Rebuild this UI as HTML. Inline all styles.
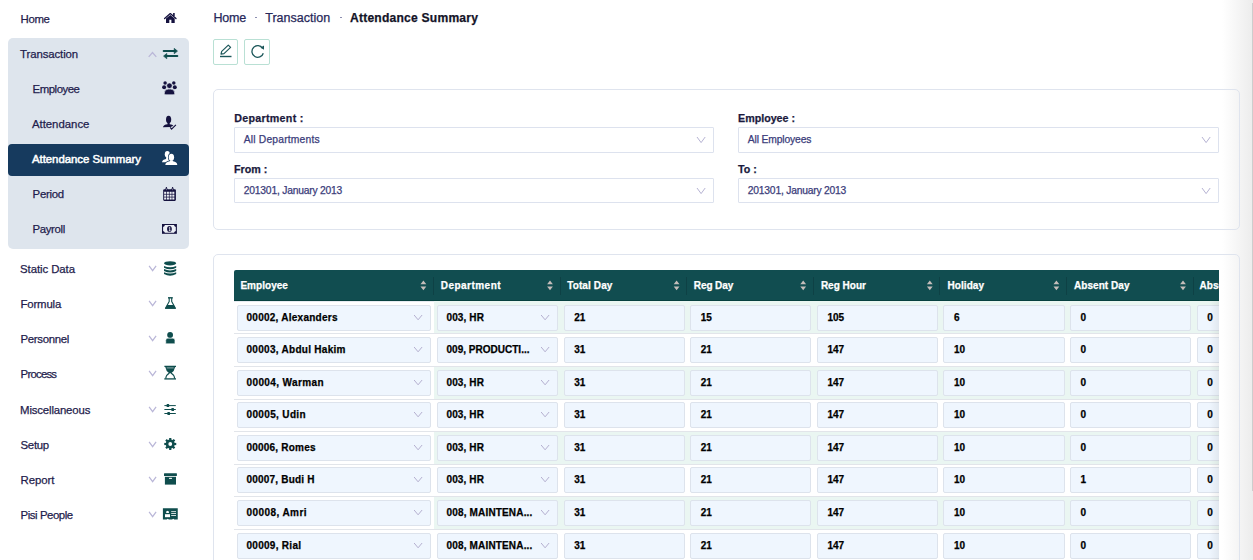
<!DOCTYPE html><html><head><meta charset="utf-8"><style>
*{margin:0;padding:0;box-sizing:border-box}
html,body{width:1253px;height:560px;overflow:hidden;background:#fff;font-family:"Liberation Sans", sans-serif}
.t{position:absolute;line-height:1;white-space:nowrap;-webkit-text-stroke:0.25px currentColor}
.a{position:absolute}
svg{position:absolute;overflow:visible}
</style></head><body>
<div class="a" style="left:1222px;top:0;width:31px;height:560px;background:linear-gradient(90deg,rgba(236,236,236,0),rgba(236,236,236,1))"></div><div class="a" style="left:8px;top:38px;width:181px;height:211px;background:#dee5ed;border-radius:5px"></div><div class="a" style="left:8px;top:144px;width:181px;height:32px;background:#163a5e;border-radius:4px"></div><div class="t" style="left:20.60px;top:14.15px;font-size:11.4px;color:#1f1d4d;letter-spacing:-0.372px;">Home</div>
<div class="t" style="left:20.10px;top:49.15px;font-size:11.4px;color:#1f1d4d;letter-spacing:-0.104px;">Transaction</div>
<div class="t" style="left:32.60px;top:84.15px;font-size:11.4px;color:#1f1d4d;letter-spacing:-0.471px;">Employee</div>
<div class="t" style="left:31.90px;top:119.15px;font-size:11.4px;color:#1f1d4d;letter-spacing:-0.009px;">Attendance</div>
<div class="t" style="left:32.00px;top:154.15px;font-size:11.4px;color:#ffffff;letter-spacing:-0.037px;-webkit-text-stroke:0.5px #fff;">Attendance Summary</div>
<div class="t" style="left:32.60px;top:189.15px;font-size:11.4px;color:#1f1d4d;letter-spacing:-0.271px;">Period</div>
<div class="t" style="left:32.60px;top:224.15px;font-size:11.4px;color:#1f1d4d;letter-spacing:-0.375px;">Payroll</div>
<div class="t" style="left:20.10px;top:264.15px;font-size:11.4px;color:#1f1d4d;letter-spacing:-0.077px;">Static Data</div>
<div class="t" style="left:20.60px;top:299.15px;font-size:11.4px;color:#1f1d4d;letter-spacing:-0.186px;">Formula</div>
<div class="t" style="left:20.60px;top:334.15px;font-size:11.4px;color:#1f1d4d;letter-spacing:-0.329px;">Personnel</div>
<div class="t" style="left:20.60px;top:369.15px;font-size:11.4px;color:#1f1d4d;letter-spacing:-0.779px;">Process</div>
<div class="t" style="left:20.10px;top:405.15px;font-size:11.4px;color:#1f1d4d;letter-spacing:-0.161px;">Miscellaneous</div>
<div class="t" style="left:20.60px;top:440.15px;font-size:11.4px;color:#1f1d4d;letter-spacing:-0.322px;">Setup</div>
<div class="t" style="left:20.60px;top:475.15px;font-size:11.4px;color:#1f1d4d;letter-spacing:-0.082px;">Report</div>
<div class="t" style="left:20.60px;top:510.15px;font-size:11.4px;color:#1f1d4d;letter-spacing:-0.443px;">Pisi People</div>
<svg style="left:0;top:0" width="1253" height="560"><path d="M164.6 18.6 L170.3 13.6 L176 18.6" fill="none" stroke="#15123f" stroke-width="1.3" stroke-linecap="round" stroke-linejoin="round"/>
<rect x="173.1" y="13" width="1.6" height="3" fill="#15123f"/>
<path d="M166 18.6 L170.3 15 L174.7 18.6 L174.7 22.9 L171.4 22.9 L171.4 19.8 L169.3 19.8 L169.3 22.9 L166 22.9 Z" fill="#15123f"/><path d="M163.7 51.1 H175" stroke="#0f4d4d" stroke-width="2" stroke-linecap="round"/>
<path d="M174.2 48.3 L177.5 51.1 L174.2 53.8 Z" fill="#0f4d4d" stroke="#0f4d4d" stroke-width="0.6" stroke-linejoin="round"/>
<path d="M166 56.1 H177.3" stroke="#0f4d4d" stroke-width="2" stroke-linecap="round"/>
<path d="M166.8 53.4 L163.5 56.1 L166.8 58.8 Z" fill="#0f4d4d" stroke="#0f4d4d" stroke-width="0.6" stroke-linejoin="round"/><circle cx="165.1" cy="83" r="1.75" fill="#15123f"/><circle cx="173.8" cy="83" r="1.75" fill="#15123f"/>
<circle cx="164.1" cy="87.2" r="2" fill="#15123f"/><circle cx="174.8" cy="87.2" r="2" fill="#15123f"/>
<circle cx="169.45" cy="85.7" r="2.8" fill="#15123f" stroke="#dee5ed" stroke-width="0.7"/>
<path d="M164.3 93 Q164.3 89.1 168.2 89.1 H170.8 Q174.7 89.1 174.7 93 V93.3 Q174.7 94.8 173.2 94.8 H165.8 Q164.3 94.8 164.3 93.3 Z" fill="#15123f" stroke="#dee5ed" stroke-width="0.7"/><ellipse cx="168.6" cy="119.5" rx="2.6" ry="3.8" fill="#15123f"/>
<path d="M167.5 122.5 H169.7 V124.2 Q172.6 124.5 173.4 125.7 L170.6 127.1 Q167 127.1 162.9 127.3 Q163.4 124.6 167.5 124.2 Z" fill="#15123f"/>
<path d="M170.2 127.3 L171.6 129.2 L175.9 124.8" fill="none" stroke="#15123f" stroke-width="1.15" stroke-linejoin="round"/><ellipse cx="167.3" cy="154.2" rx="2.5" ry="3.3" fill="#ffffff"/>
<path d="M162 162.2 Q162.4 159.6 166 159 L166.3 157 H168.3 L168.6 159 Q169.6 159.2 170.2 159.8 L169.6 162.2 Z" fill="#ffffff"/><ellipse cx="171.4" cy="157.2" rx="2.7" ry="3.5" fill="#163a5e" stroke="#163a5e" stroke-width="1.5"/><path d="M165.3 165 Q165.5 162 169.8 161.3 L170.3 160.3 H172.5 L173 161.3 Q177.1 162 177.3 165 Z" fill="#163a5e" stroke="#163a5e" stroke-width="1.5"/><ellipse cx="171.4" cy="157.2" rx="2.7" ry="3.5" fill="#ffffff" stroke="none" stroke-width="0"/><path d="M165.3 165 Q165.5 162 169.8 161.3 L170.3 160.3 H172.5 L173 161.3 Q177.1 162 177.3 165 Z" fill="#ffffff" stroke="none" stroke-width="0"/><rect x="163.2" y="189.2" width="12.7" height="11.7" rx="1.1" fill="#15123f"/>
<path d="M165.3 190.6 L166.4 187.1 L167.5 190.6 Z M171.5 190.6 L172.6 187.1 L173.7 190.6 Z" fill="#15123f" stroke="#15123f" stroke-width="0.8" stroke-linejoin="round"/>
<path d="M166.4 188.6 V190.2 M172.6 188.6 V190.2" stroke="#dee5ed" stroke-width="0.5"/><rect x="164.15" y="191.75" width="2.05" height="2.1" fill="#eceff5"/><rect x="164.15" y="194.60" width="2.05" height="2.1" fill="#eceff5"/><rect x="164.15" y="197.45" width="2.05" height="2.1" fill="#eceff5"/><rect x="166.87" y="191.75" width="2.05" height="2.1" fill="#eceff5"/><rect x="166.87" y="194.60" width="2.05" height="2.1" fill="#eceff5"/><rect x="166.87" y="197.45" width="2.05" height="2.1" fill="#eceff5"/><rect x="169.59" y="191.75" width="2.05" height="2.1" fill="#eceff5"/><rect x="169.59" y="194.60" width="2.05" height="2.1" fill="#eceff5"/><rect x="169.59" y="197.45" width="2.05" height="2.1" fill="#eceff5"/><rect x="172.31" y="191.75" width="2.05" height="2.1" fill="#eceff5"/><rect x="172.31" y="194.60" width="2.05" height="2.1" fill="#eceff5"/><rect x="172.31" y="197.45" width="2.05" height="2.1" fill="#eceff5"/><rect x="162" y="224" width="14.9" height="9.8" fill="#15123f"/>
<path d="M164.9 225.1 H174 Q174.3 226.5 175.8 226.9 V230.9 Q174.3 231.3 174 232.7 H164.9 Q164.6 231.3 163.1 230.9 V226.9 Q164.6 226.5 164.9 225.1 Z" fill="#eceff5"/>
<ellipse cx="169.45" cy="228.9" rx="2.35" ry="2.9" fill="#15123f"/>
<path d="M168.8 227.8 L169.7 227.2 V230.7 M168.9 230.6 H170.5" stroke="#eceff5" stroke-width="0.8" fill="none"/><ellipse cx="170.1" cy="263.3" rx="6.1" ry="2.15" fill="#0f4d4d"/><path d="M164 265.90 Q170.1 268.50 176.2 265.90 V267.70 Q170.1 270.90 164 267.70 Z" fill="#0f4d4d"/><path d="M164 269.10 Q170.1 271.70 176.2 269.10 V270.90 Q170.1 274.10 164 270.90 Z" fill="#0f4d4d"/><path d="M164 272.30 Q170.1 274.90 176.2 272.30 V274.10 Q170.1 277.30 164 274.10 Z" fill="#0f4d4d"/><path d="M168 297.8 H172.8" stroke="#0f4d4d" stroke-width="1.4"/>
<path d="M169.2 298 V301.4 L165.5 308.2 H175.4 L171.7 301.4 V298" fill="none" stroke="#0f4d4d" stroke-width="1.1" stroke-linejoin="round"/>
<path d="M167.2 305 H173.7 L175.9 308.8 H164.9 Z" fill="#0f4d4d"/><circle cx="170.1" cy="335" r="2.9" fill="#0f4d4d"/>
<path d="M165.8 343.7 V340.2 Q165.8 338.2 167.8 338.2 H172.9 Q174.9 338.2 174.9 340.2 V343.7 Z" fill="#0f4d4d" stroke="#fff" stroke-width="0.5"/><path d="M164.4 366.4 H176" stroke="#0f4d4d" stroke-width="1.3"/>
<path d="M164.3 378.9 H176" stroke="#0f4d4d" stroke-width="1.3"/>
<path d="M165.3 367 L175.1 367 Q174.5 371 171.2 373.3 L169.2 373.3 Q165.9 371 165.3 367 Z" fill="#0f4d4d"/>
<path d="M166.7 367.9 H173.7" stroke="#e8efee" stroke-width="0.6"/>
<path d="M169.4 373 Q166 375 165.7 378.6 M171 373 Q174.4 375 174.7 378.6" fill="none" stroke="#0f4d4d" stroke-width="1.1"/><path d="M164.4 405.6 H175.8 M164.4 409.5 H175.8 M164.4 413.5 H175.8" stroke="#0f4d4d" stroke-width="1"/>
<rect x="166.6" y="404.1" width="2.6" height="3" rx="0.6" fill="#0f4d4d"/>
<rect x="171.4" y="408" width="2.6" height="3" rx="0.6" fill="#0f4d4d"/>
<rect x="167.4" y="412" width="2.6" height="3" rx="0.6" fill="#0f4d4d"/><rect x="169.15" y="438.00" width="2.2" height="3" fill="#0f4d4d" transform="rotate(0 170.25 444)"/><rect x="169.15" y="438.00" width="2.2" height="3" fill="#0f4d4d" transform="rotate(45 170.25 444)"/><rect x="169.15" y="438.00" width="2.2" height="3" fill="#0f4d4d" transform="rotate(90 170.25 444)"/><rect x="169.15" y="438.00" width="2.2" height="3" fill="#0f4d4d" transform="rotate(135 170.25 444)"/><rect x="169.15" y="438.00" width="2.2" height="3" fill="#0f4d4d" transform="rotate(180 170.25 444)"/><rect x="169.15" y="438.00" width="2.2" height="3" fill="#0f4d4d" transform="rotate(225 170.25 444)"/><rect x="169.15" y="438.00" width="2.2" height="3" fill="#0f4d4d" transform="rotate(270 170.25 444)"/><rect x="169.15" y="438.00" width="2.2" height="3" fill="#0f4d4d" transform="rotate(315 170.25 444)"/><circle cx="170.25" cy="444" r="3.2" fill="none" stroke="#0f4d4d" stroke-width="2.6"/><rect x="164" y="473.2" width="12.9" height="2.8" rx="0.5" fill="#0f4d4d"/>
<rect x="164.9" y="476.8" width="11.1" height="7.8" fill="#0f4d4d"/>
<rect x="169" y="477.8" width="3" height="1.2" rx="0.5" fill="#e6eeed"/><path d="M162.9 508.2 H177.75 V519.6 H174.3 L173.2 518.8 L172.1 519.6 H168.8 L167.8 518.8 L166.7 519.6 H162.9 Z" fill="#0f4d4d"/>
<path d="M166.2 511.6 L167.5 510.7 L168.9 511.6 V513.1 H166.2 Z" fill="#ffffff"/>
<rect x="165" y="514.2" width="5" height="3" fill="#ffffff"/>
<path d="M171.2 511.6 H176 M171.2 513.5 H176 M171.2 515.5 H176" stroke="#ffffff" stroke-width="0.8"/></svg><svg style="left:0;top:0" width="1" height="1"><path d="M148.7 56.9 L152.5 52.5 L156.29999999999998 56.9" fill="none" stroke="#bab7d8" stroke-width="1.25"/></svg><svg style="left:0;top:0" width="1" height="1"><path d="M149.1 265.9 L152.6 270.59999999999997 L156.1 265.9" fill="none" stroke="#bab7d8" stroke-width="1.25"/></svg><svg style="left:0;top:0" width="1" height="1"><path d="M149.1 300.9 L152.6 305.59999999999997 L156.1 300.9" fill="none" stroke="#bab7d8" stroke-width="1.25"/></svg><svg style="left:0;top:0" width="1" height="1"><path d="M149.1 335.9 L152.6 340.59999999999997 L156.1 335.9" fill="none" stroke="#bab7d8" stroke-width="1.25"/></svg><svg style="left:0;top:0" width="1" height="1"><path d="M149.1 370.9 L152.6 375.59999999999997 L156.1 370.9" fill="none" stroke="#bab7d8" stroke-width="1.25"/></svg><svg style="left:0;top:0" width="1" height="1"><path d="M149.1 406.9 L152.6 411.59999999999997 L156.1 406.9" fill="none" stroke="#bab7d8" stroke-width="1.25"/></svg><svg style="left:0;top:0" width="1" height="1"><path d="M149.1 441.9 L152.6 446.59999999999997 L156.1 441.9" fill="none" stroke="#bab7d8" stroke-width="1.25"/></svg><svg style="left:0;top:0" width="1" height="1"><path d="M149.1 476.9 L152.6 481.59999999999997 L156.1 476.9" fill="none" stroke="#bab7d8" stroke-width="1.25"/></svg><svg style="left:0;top:0" width="1" height="1"><path d="M149.1 511.9 L152.6 516.6 L156.1 511.9" fill="none" stroke="#bab7d8" stroke-width="1.25"/></svg><div class="t" style="left:213.40px;top:12.22px;font-size:12.5px;color:#27285a;letter-spacing:-0.150px;">Home</div>
<div class="a" style="left:255px;top:16.6px;width:2px;height:1.6px;border-radius:0.8px;background:#7d7fa6"></div><div class="t" style="left:265.30px;top:12.22px;font-size:12.5px;color:#27285a;letter-spacing:-0.005px;">Transaction</div>
<div class="a" style="left:339.5px;top:16.6px;width:2px;height:1.6px;border-radius:0.8px;background:#7d7fa6"></div><div class="t" style="left:350.00px;top:11.76px;font-size:12.1px;color:#141428;font-weight:700;letter-spacing:0.212px;">Attendance Summary</div>
<div class="a" style="left:213px;top:39px;width:25px;height:26px;border:1px solid #b9e0d4;border-radius:2px"></div><div class="a" style="left:244px;top:39px;width:26px;height:26px;border:1px solid #b9e0d4;border-radius:2px"></div><svg style="left:0;top:0" width="1" height="1"><g fill="none" stroke="#1c575a" stroke-width="1.2" stroke-linejoin="round"><path d="M221 54.2 L221.7 51.4 L228.3 45.1 L230.6 47.4 L224 53.6 Z"/><path d="M220 56.5 H231.5" stroke-width="1.4"/></g></svg><svg style="left:0;top:0" width="1" height="1"><g fill="none" stroke="#1c575a" stroke-width="1.3"><path d="M262.6 48.3 A5.8 5.8 0 1 0 263.3 53.2"/></g><path d="M260.5 47.5 L264 45.5 L264 49.8 Z" fill="#1c575a"/></svg><div class="a" style="left:213px;top:89px;width:1027px;height:141px;border:1px solid #dfe4ee;border-radius:5px"></div><div class="t" style="left:234.20px;top:113.14px;font-size:10.7px;color:#1b1a3d;font-weight:700;letter-spacing:0.291px;">Department :</div>
<div class="a" style="left:234px;top:127px;width:480px;height:26px;border:1px solid #dde2ee;border-radius:1px"></div><div class="t" style="left:243.80px;top:135.28px;font-size:10.3px;color:#3a3c7a;letter-spacing:0.180px;">All Departments</div>
<svg style="left:0;top:0" width="1" height="1"><path d="M697 137 L701.1 142.6 L705.2 137" fill="none" stroke="#b6b3d3" stroke-width="1"/></svg><div class="t" style="left:738.00px;top:113.14px;font-size:10.7px;color:#1b1a3d;font-weight:700;">Employee :</div>
<div class="a" style="left:738px;top:127px;width:481px;height:26px;border:1px solid #dde2ee;border-radius:1px"></div><div class="t" style="left:747.80px;top:135.28px;font-size:10.3px;color:#3a3c7a;letter-spacing:-0.138px;">All Employees</div>
<svg style="left:0;top:0" width="1" height="1"><path d="M1202 137 L1206.1 142.6 L1210.2 137" fill="none" stroke="#b6b3d3" stroke-width="1"/></svg><div class="t" style="left:234.00px;top:164.14px;font-size:10.7px;color:#1b1a3d;font-weight:700;">From :</div>
<div class="a" style="left:234px;top:178px;width:480px;height:25px;border:1px solid #dde2ee;border-radius:1px"></div><div class="t" style="left:243.80px;top:186.28px;font-size:10.3px;color:#3a3c7a;letter-spacing:-0.211px;">201301, January 2013</div>
<svg style="left:0;top:0" width="1" height="1"><path d="M697 188 L701.1 193.6 L705.2 188" fill="none" stroke="#b6b3d3" stroke-width="1"/></svg><div class="t" style="left:738.00px;top:164.14px;font-size:10.7px;color:#1b1a3d;font-weight:700;">To :</div>
<div class="a" style="left:738px;top:178px;width:481px;height:25px;border:1px solid #dde2ee;border-radius:1px"></div><div class="t" style="left:747.80px;top:186.28px;font-size:10.3px;color:#3a3c7a;letter-spacing:-0.211px;">201301, January 2013</div>
<svg style="left:0;top:0" width="1" height="1"><path d="M1202 188 L1206.1 193.6 L1210.2 188" fill="none" stroke="#b6b3d3" stroke-width="1"/></svg><div class="a" style="left:213px;top:254px;width:1027px;height:330px;border:1px solid #dfe4ee;border-radius:5px"></div><div class="a" style="left:234px;top:270px;width:985px;height:290px;overflow:hidden"><div class="a" style="left:0;top:0;width:985px;height:30px;background:#114d50;border-radius:2px 0 0 0"></div><div class="a" style="left:0;top:30px;width:985px;height:1px;background:#07413f"></div><div class="a" style="left:0;top:31px;width:985px;height:1px;background:#e6ebf1"></div><div class="t" style="left:6.40px;top:11.23px;font-size:10.0px;color:#ffffff;font-weight:700;letter-spacing:0.037px;">Employee</div>
<svg style="left:0;top:0" width="1" height="1"><path d="M186.5 14.2 L189.4 10.4 L192.3 14.2 Z M186.5 16.6 L189.4 20.3 L192.3 16.6 Z" fill="#c4bdba"/></svg><div class="t" style="left:206.70px;top:11.23px;font-size:10.0px;color:#ffffff;font-weight:700;letter-spacing:0.481px;">Department</div>
<div class="a" style="left:199px;top:7px;width:1px;height:18px;background:#0e4145"></div><svg style="left:0;top:0" width="1" height="1"><path d="M313.1 14.2 L316.0 10.4 L318.9 14.2 Z M313.1 16.6 L316.0 20.3 L318.9 16.6 Z" fill="#c4bdba"/></svg><div class="t" style="left:333.20px;top:11.23px;font-size:10.0px;color:#ffffff;font-weight:700;letter-spacing:0.116px;">Total Day</div>
<div class="a" style="left:325.6px;top:7px;width:1px;height:18px;background:#0e4145"></div><svg style="left:0;top:0" width="1" height="1"><path d="M439.70000000000005 14.2 L442.6 10.4 L445.5 14.2 Z M439.70000000000005 16.6 L442.6 20.3 L445.5 16.6 Z" fill="#c4bdba"/></svg><div class="t" style="left:459.80px;top:11.23px;font-size:10.0px;color:#ffffff;font-weight:700;letter-spacing:-0.102px;">Reg Day</div>
<div class="a" style="left:452.20000000000005px;top:7px;width:1px;height:18px;background:#0e4145"></div><svg style="left:0;top:0" width="1" height="1"><path d="M566.3 14.2 L569.1999999999999 10.4 L572.0999999999999 14.2 Z M566.3 16.6 L569.1999999999999 20.3 L572.0999999999999 16.6 Z" fill="#c4bdba"/></svg><div class="t" style="left:586.90px;top:11.23px;font-size:10.0px;color:#ffffff;font-weight:700;letter-spacing:0.000px;">Reg Hour</div>
<div class="a" style="left:578.8px;top:7px;width:1px;height:18px;background:#0e4145"></div><svg style="left:0;top:0" width="1" height="1"><path d="M692.9 14.2 L695.8 10.4 L698.6999999999999 14.2 Z M692.9 16.6 L695.8 20.3 L698.6999999999999 16.6 Z" fill="#c4bdba"/></svg><div class="t" style="left:713.60px;top:11.23px;font-size:10.0px;color:#ffffff;font-weight:700;letter-spacing:0.047px;">Holiday</div>
<div class="a" style="left:705.4px;top:7px;width:1px;height:18px;background:#0e4145"></div><svg style="left:0;top:0" width="1" height="1"><path d="M819.5 14.2 L822.4 10.4 L825.3 14.2 Z M819.5 16.6 L822.4 20.3 L825.3 16.6 Z" fill="#c4bdba"/></svg><div class="t" style="left:840.10px;top:11.23px;font-size:10.0px;color:#ffffff;font-weight:700;letter-spacing:0.042px;">Absent Day</div>
<div class="a" style="left:832.0px;top:7px;width:1px;height:18px;background:#0e4145"></div><svg style="left:0;top:0" width="1" height="1"><path d="M946.0999999999999 14.2 L948.9999999999999 10.4 L951.8999999999999 14.2 Z M946.0999999999999 16.6 L948.9999999999999 20.3 L951.8999999999999 16.6 Z" fill="#c4bdba"/></svg><div class="t" style="left:965.60px;top:11.23px;font-size:10.0px;color:#ffffff;font-weight:700;">Absent Hour</div>
<div class="a" style="left:958.5999999999999px;top:7px;width:1px;height:18px;background:#0e4145"></div><svg style="left:0;top:0" width="1" height="1"><path d="M1072.6999999999998 14.2 L1075.6 10.4 L1078.5 14.2 Z M1072.6999999999998 16.6 L1075.6 20.3 L1078.5 16.6 Z" fill="#c4bdba"/></svg><div class="a" style="left:200px;top:31px;width:800px;height:32px;background:#eaf6f2"></div><div class="a" style="left:0;top:63px;width:985px;height:1px;background:#e2e5ea"></div><div class="a" style="left:3px;top:35px;width:194px;height:26px;background:#eff6fe;border:1px solid #dde3ec;border-radius:2px"></div><div class="t" style="left:12.50px;top:43.33px;font-size:10.0px;color:#000000;font-weight:700;letter-spacing:0.256px;">00002, Alexanders</div>
<svg style="left:0;top:0" width="1" height="1"><path d="M180.1 45 L184.1 49.8 L188.1 45" fill="none" stroke="#b5b0d0" stroke-width="1"/></svg><div class="a" style="left:203px;top:35px;width:121px;height:26px;background:#eff6fe;border:1px solid #dde3ec;border-radius:2px"></div><div class="t" style="left:212.50px;top:43.33px;font-size:10.0px;color:#000000;font-weight:700;letter-spacing:0.120px;">003, HR</div>
<svg style="left:0;top:0" width="1" height="1"><path d="M307.1 45 L311.1 49.8 L315.1 45" fill="none" stroke="#b5b0d0" stroke-width="1"/></svg><div class="a" style="left:330px;top:35px;width:121px;height:26px;background:#eff6fe;border:1px solid #dde3ec;border-radius:2px"></div><div class="t" style="left:340.20px;top:43.33px;font-size:10.0px;color:#000000;font-weight:700;">21</div>
<div class="a" style="left:456px;top:35px;width:121px;height:26px;background:#eff6fe;border:1px solid #dde3ec;border-radius:2px"></div><div class="t" style="left:466.80px;top:43.33px;font-size:10.0px;color:#000000;font-weight:700;">15</div>
<div class="a" style="left:583px;top:35px;width:121px;height:26px;background:#eff6fe;border:1px solid #dde3ec;border-radius:2px"></div><div class="t" style="left:593.40px;top:43.33px;font-size:10.0px;color:#000000;font-weight:700;">105</div>
<div class="a" style="left:709px;top:35px;width:122px;height:26px;background:#eff6fe;border:1px solid #dde3ec;border-radius:2px"></div><div class="t" style="left:720.00px;top:43.33px;font-size:10.0px;color:#000000;font-weight:700;">6</div>
<div class="a" style="left:836px;top:35px;width:121px;height:26px;background:#eff6fe;border:1px solid #dde3ec;border-radius:2px"></div><div class="t" style="left:846.60px;top:43.33px;font-size:10.0px;color:#000000;font-weight:700;">0</div>
<div class="a" style="left:963px;top:35px;width:121px;height:26px;background:#eff6fe;border:1px solid #dde3ec;border-radius:2px"></div><div class="t" style="left:973.20px;top:43.33px;font-size:10.0px;color:#000000;font-weight:700;">0</div>
<div class="a" style="left:0;top:96px;width:985px;height:1px;background:#e2e5ea"></div><div class="a" style="left:3px;top:67px;width:194px;height:26px;background:#eff6fe;border:1px solid #dde3ec;border-radius:2px"></div><div class="t" style="left:12.50px;top:75.33px;font-size:10.0px;color:#000000;font-weight:700;letter-spacing:0.288px;">00003, Abdul Hakim</div>
<svg style="left:0;top:0" width="1" height="1"><path d="M180.1 77 L184.1 81.8 L188.1 77" fill="none" stroke="#b5b0d0" stroke-width="1"/></svg><div class="a" style="left:203px;top:67px;width:121px;height:26px;background:#eff6fe;border:1px solid #dde3ec;border-radius:2px"></div><div class="t" style="left:212.50px;top:75.33px;font-size:10.0px;color:#000000;font-weight:700;letter-spacing:0.013px;">009, PRODUCTI...</div>
<svg style="left:0;top:0" width="1" height="1"><path d="M307.1 77 L311.1 81.8 L315.1 77" fill="none" stroke="#b5b0d0" stroke-width="1"/></svg><div class="a" style="left:330px;top:67px;width:121px;height:26px;background:#eff6fe;border:1px solid #dde3ec;border-radius:2px"></div><div class="t" style="left:340.20px;top:75.33px;font-size:10.0px;color:#000000;font-weight:700;">31</div>
<div class="a" style="left:456px;top:67px;width:121px;height:26px;background:#eff6fe;border:1px solid #dde3ec;border-radius:2px"></div><div class="t" style="left:466.80px;top:75.33px;font-size:10.0px;color:#000000;font-weight:700;">21</div>
<div class="a" style="left:583px;top:67px;width:121px;height:26px;background:#eff6fe;border:1px solid #dde3ec;border-radius:2px"></div><div class="t" style="left:593.40px;top:75.33px;font-size:10.0px;color:#000000;font-weight:700;">147</div>
<div class="a" style="left:709px;top:67px;width:122px;height:26px;background:#eff6fe;border:1px solid #dde3ec;border-radius:2px"></div><div class="t" style="left:720.00px;top:75.33px;font-size:10.0px;color:#000000;font-weight:700;">10</div>
<div class="a" style="left:836px;top:67px;width:121px;height:26px;background:#eff6fe;border:1px solid #dde3ec;border-radius:2px"></div><div class="t" style="left:846.60px;top:75.33px;font-size:10.0px;color:#000000;font-weight:700;">0</div>
<div class="a" style="left:963px;top:67px;width:121px;height:26px;background:#eff6fe;border:1px solid #dde3ec;border-radius:2px"></div><div class="t" style="left:973.20px;top:75.33px;font-size:10.0px;color:#000000;font-weight:700;">0</div>
<div class="a" style="left:200px;top:97px;width:800px;height:32px;background:#eaf6f2"></div><div class="a" style="left:0;top:129px;width:985px;height:1px;background:#e2e5ea"></div><div class="a" style="left:3px;top:100px;width:194px;height:26px;background:#eff6fe;border:1px solid #dde3ec;border-radius:2px"></div><div class="t" style="left:12.50px;top:108.33px;font-size:10.0px;color:#000000;font-weight:700;letter-spacing:0.387px;">00004, Warman</div>
<svg style="left:0;top:0" width="1" height="1"><path d="M180.1 110 L184.1 114.8 L188.1 110" fill="none" stroke="#b5b0d0" stroke-width="1"/></svg><div class="a" style="left:203px;top:100px;width:121px;height:26px;background:#eff6fe;border:1px solid #dde3ec;border-radius:2px"></div><div class="t" style="left:212.50px;top:108.33px;font-size:10.0px;color:#000000;font-weight:700;letter-spacing:0.120px;">003, HR</div>
<svg style="left:0;top:0" width="1" height="1"><path d="M307.1 110 L311.1 114.8 L315.1 110" fill="none" stroke="#b5b0d0" stroke-width="1"/></svg><div class="a" style="left:330px;top:100px;width:121px;height:26px;background:#eff6fe;border:1px solid #dde3ec;border-radius:2px"></div><div class="t" style="left:340.20px;top:108.33px;font-size:10.0px;color:#000000;font-weight:700;">31</div>
<div class="a" style="left:456px;top:100px;width:121px;height:26px;background:#eff6fe;border:1px solid #dde3ec;border-radius:2px"></div><div class="t" style="left:466.80px;top:108.33px;font-size:10.0px;color:#000000;font-weight:700;">21</div>
<div class="a" style="left:583px;top:100px;width:121px;height:26px;background:#eff6fe;border:1px solid #dde3ec;border-radius:2px"></div><div class="t" style="left:593.40px;top:108.33px;font-size:10.0px;color:#000000;font-weight:700;">147</div>
<div class="a" style="left:709px;top:100px;width:122px;height:26px;background:#eff6fe;border:1px solid #dde3ec;border-radius:2px"></div><div class="t" style="left:720.00px;top:108.33px;font-size:10.0px;color:#000000;font-weight:700;">10</div>
<div class="a" style="left:836px;top:100px;width:121px;height:26px;background:#eff6fe;border:1px solid #dde3ec;border-radius:2px"></div><div class="t" style="left:846.60px;top:108.33px;font-size:10.0px;color:#000000;font-weight:700;">0</div>
<div class="a" style="left:963px;top:100px;width:121px;height:26px;background:#eff6fe;border:1px solid #dde3ec;border-radius:2px"></div><div class="t" style="left:973.20px;top:108.33px;font-size:10.0px;color:#000000;font-weight:700;">0</div>
<div class="a" style="left:0;top:161px;width:985px;height:1px;background:#e2e5ea"></div><div class="a" style="left:3px;top:132px;width:194px;height:26px;background:#eff6fe;border:1px solid #dde3ec;border-radius:2px"></div><div class="t" style="left:12.50px;top:140.34px;font-size:10.0px;color:#000000;font-weight:700;letter-spacing:0.352px;">00005, Udin</div>
<svg style="left:0;top:0" width="1" height="1"><path d="M180.1 142 L184.1 146.8 L188.1 142" fill="none" stroke="#b5b0d0" stroke-width="1"/></svg><div class="a" style="left:203px;top:132px;width:121px;height:26px;background:#eff6fe;border:1px solid #dde3ec;border-radius:2px"></div><div class="t" style="left:212.50px;top:140.34px;font-size:10.0px;color:#000000;font-weight:700;letter-spacing:0.120px;">003, HR</div>
<svg style="left:0;top:0" width="1" height="1"><path d="M307.1 142 L311.1 146.8 L315.1 142" fill="none" stroke="#b5b0d0" stroke-width="1"/></svg><div class="a" style="left:330px;top:132px;width:121px;height:26px;background:#eff6fe;border:1px solid #dde3ec;border-radius:2px"></div><div class="t" style="left:340.20px;top:140.34px;font-size:10.0px;color:#000000;font-weight:700;">31</div>
<div class="a" style="left:456px;top:132px;width:121px;height:26px;background:#eff6fe;border:1px solid #dde3ec;border-radius:2px"></div><div class="t" style="left:466.80px;top:140.34px;font-size:10.0px;color:#000000;font-weight:700;">21</div>
<div class="a" style="left:583px;top:132px;width:121px;height:26px;background:#eff6fe;border:1px solid #dde3ec;border-radius:2px"></div><div class="t" style="left:593.40px;top:140.34px;font-size:10.0px;color:#000000;font-weight:700;">147</div>
<div class="a" style="left:709px;top:132px;width:122px;height:26px;background:#eff6fe;border:1px solid #dde3ec;border-radius:2px"></div><div class="t" style="left:720.00px;top:140.34px;font-size:10.0px;color:#000000;font-weight:700;">10</div>
<div class="a" style="left:836px;top:132px;width:121px;height:26px;background:#eff6fe;border:1px solid #dde3ec;border-radius:2px"></div><div class="t" style="left:846.60px;top:140.34px;font-size:10.0px;color:#000000;font-weight:700;">0</div>
<div class="a" style="left:963px;top:132px;width:121px;height:26px;background:#eff6fe;border:1px solid #dde3ec;border-radius:2px"></div><div class="t" style="left:973.20px;top:140.34px;font-size:10.0px;color:#000000;font-weight:700;">0</div>
<div class="a" style="left:200px;top:162px;width:800px;height:32px;background:#eaf6f2"></div><div class="a" style="left:0;top:194px;width:985px;height:1px;background:#e2e5ea"></div><div class="a" style="left:3px;top:165px;width:194px;height:26px;background:#eff6fe;border:1px solid #dde3ec;border-radius:2px"></div><div class="t" style="left:12.50px;top:173.34px;font-size:10.0px;color:#000000;font-weight:700;letter-spacing:0.208px;">00006, Romes</div>
<svg style="left:0;top:0" width="1" height="1"><path d="M180.1 175 L184.1 179.8 L188.1 175" fill="none" stroke="#b5b0d0" stroke-width="1"/></svg><div class="a" style="left:203px;top:165px;width:121px;height:26px;background:#eff6fe;border:1px solid #dde3ec;border-radius:2px"></div><div class="t" style="left:212.50px;top:173.34px;font-size:10.0px;color:#000000;font-weight:700;letter-spacing:0.120px;">003, HR</div>
<svg style="left:0;top:0" width="1" height="1"><path d="M307.1 175 L311.1 179.8 L315.1 175" fill="none" stroke="#b5b0d0" stroke-width="1"/></svg><div class="a" style="left:330px;top:165px;width:121px;height:26px;background:#eff6fe;border:1px solid #dde3ec;border-radius:2px"></div><div class="t" style="left:340.20px;top:173.34px;font-size:10.0px;color:#000000;font-weight:700;">31</div>
<div class="a" style="left:456px;top:165px;width:121px;height:26px;background:#eff6fe;border:1px solid #dde3ec;border-radius:2px"></div><div class="t" style="left:466.80px;top:173.34px;font-size:10.0px;color:#000000;font-weight:700;">21</div>
<div class="a" style="left:583px;top:165px;width:121px;height:26px;background:#eff6fe;border:1px solid #dde3ec;border-radius:2px"></div><div class="t" style="left:593.40px;top:173.34px;font-size:10.0px;color:#000000;font-weight:700;">147</div>
<div class="a" style="left:709px;top:165px;width:122px;height:26px;background:#eff6fe;border:1px solid #dde3ec;border-radius:2px"></div><div class="t" style="left:720.00px;top:173.34px;font-size:10.0px;color:#000000;font-weight:700;">10</div>
<div class="a" style="left:836px;top:165px;width:121px;height:26px;background:#eff6fe;border:1px solid #dde3ec;border-radius:2px"></div><div class="t" style="left:846.60px;top:173.34px;font-size:10.0px;color:#000000;font-weight:700;">0</div>
<div class="a" style="left:963px;top:165px;width:121px;height:26px;background:#eff6fe;border:1px solid #dde3ec;border-radius:2px"></div><div class="t" style="left:973.20px;top:173.34px;font-size:10.0px;color:#000000;font-weight:700;">0</div>
<div class="a" style="left:0;top:226px;width:985px;height:1px;background:#e2e5ea"></div><div class="a" style="left:3px;top:197px;width:194px;height:26px;background:#eff6fe;border:1px solid #dde3ec;border-radius:2px"></div><div class="t" style="left:12.50px;top:205.34px;font-size:10.0px;color:#000000;font-weight:700;letter-spacing:0.202px;">00007, Budi H</div>
<svg style="left:0;top:0" width="1" height="1"><path d="M180.1 207 L184.1 211.8 L188.1 207" fill="none" stroke="#b5b0d0" stroke-width="1"/></svg><div class="a" style="left:203px;top:197px;width:121px;height:26px;background:#eff6fe;border:1px solid #dde3ec;border-radius:2px"></div><div class="t" style="left:212.50px;top:205.34px;font-size:10.0px;color:#000000;font-weight:700;letter-spacing:0.120px;">003, HR</div>
<svg style="left:0;top:0" width="1" height="1"><path d="M307.1 207 L311.1 211.8 L315.1 207" fill="none" stroke="#b5b0d0" stroke-width="1"/></svg><div class="a" style="left:330px;top:197px;width:121px;height:26px;background:#eff6fe;border:1px solid #dde3ec;border-radius:2px"></div><div class="t" style="left:340.20px;top:205.34px;font-size:10.0px;color:#000000;font-weight:700;">31</div>
<div class="a" style="left:456px;top:197px;width:121px;height:26px;background:#eff6fe;border:1px solid #dde3ec;border-radius:2px"></div><div class="t" style="left:466.80px;top:205.34px;font-size:10.0px;color:#000000;font-weight:700;">21</div>
<div class="a" style="left:583px;top:197px;width:121px;height:26px;background:#eff6fe;border:1px solid #dde3ec;border-radius:2px"></div><div class="t" style="left:593.40px;top:205.34px;font-size:10.0px;color:#000000;font-weight:700;">147</div>
<div class="a" style="left:709px;top:197px;width:122px;height:26px;background:#eff6fe;border:1px solid #dde3ec;border-radius:2px"></div><div class="t" style="left:720.00px;top:205.34px;font-size:10.0px;color:#000000;font-weight:700;">10</div>
<div class="a" style="left:836px;top:197px;width:121px;height:26px;background:#eff6fe;border:1px solid #dde3ec;border-radius:2px"></div><div class="t" style="left:846.60px;top:205.34px;font-size:10.0px;color:#000000;font-weight:700;">1</div>
<div class="a" style="left:963px;top:197px;width:121px;height:26px;background:#eff6fe;border:1px solid #dde3ec;border-radius:2px"></div><div class="t" style="left:973.20px;top:205.34px;font-size:10.0px;color:#000000;font-weight:700;">0</div>
<div class="a" style="left:200px;top:227px;width:800px;height:32px;background:#eaf6f2"></div><div class="a" style="left:0;top:259px;width:985px;height:1px;background:#e2e5ea"></div><div class="a" style="left:3px;top:230px;width:194px;height:26px;background:#eff6fe;border:1px solid #dde3ec;border-radius:2px"></div><div class="t" style="left:12.50px;top:238.34px;font-size:10.0px;color:#000000;font-weight:700;letter-spacing:0.422px;">00008, Amri</div>
<svg style="left:0;top:0" width="1" height="1"><path d="M180.1 240 L184.1 244.8 L188.1 240" fill="none" stroke="#b5b0d0" stroke-width="1"/></svg><div class="a" style="left:203px;top:230px;width:121px;height:26px;background:#eff6fe;border:1px solid #dde3ec;border-radius:2px"></div><div class="t" style="left:212.50px;top:238.34px;font-size:10.0px;color:#000000;font-weight:700;letter-spacing:0.163px;">008, MAINTENA...</div>
<svg style="left:0;top:0" width="1" height="1"><path d="M307.1 240 L311.1 244.8 L315.1 240" fill="none" stroke="#b5b0d0" stroke-width="1"/></svg><div class="a" style="left:330px;top:230px;width:121px;height:26px;background:#eff6fe;border:1px solid #dde3ec;border-radius:2px"></div><div class="t" style="left:340.20px;top:238.34px;font-size:10.0px;color:#000000;font-weight:700;">31</div>
<div class="a" style="left:456px;top:230px;width:121px;height:26px;background:#eff6fe;border:1px solid #dde3ec;border-radius:2px"></div><div class="t" style="left:466.80px;top:238.34px;font-size:10.0px;color:#000000;font-weight:700;">21</div>
<div class="a" style="left:583px;top:230px;width:121px;height:26px;background:#eff6fe;border:1px solid #dde3ec;border-radius:2px"></div><div class="t" style="left:593.40px;top:238.34px;font-size:10.0px;color:#000000;font-weight:700;">147</div>
<div class="a" style="left:709px;top:230px;width:122px;height:26px;background:#eff6fe;border:1px solid #dde3ec;border-radius:2px"></div><div class="t" style="left:720.00px;top:238.34px;font-size:10.0px;color:#000000;font-weight:700;">10</div>
<div class="a" style="left:836px;top:230px;width:121px;height:26px;background:#eff6fe;border:1px solid #dde3ec;border-radius:2px"></div><div class="t" style="left:846.60px;top:238.34px;font-size:10.0px;color:#000000;font-weight:700;">0</div>
<div class="a" style="left:963px;top:230px;width:121px;height:26px;background:#eff6fe;border:1px solid #dde3ec;border-radius:2px"></div><div class="t" style="left:973.20px;top:238.34px;font-size:10.0px;color:#000000;font-weight:700;">0</div>
<div class="a" style="left:0;top:292px;width:985px;height:1px;background:#e2e5ea"></div><div class="a" style="left:3px;top:263px;width:194px;height:26px;background:#eff6fe;border:1px solid #dde3ec;border-radius:2px"></div><div class="t" style="left:12.50px;top:271.34px;font-size:10.0px;color:#000000;font-weight:700;letter-spacing:0.280px;">00009, Rial</div>
<svg style="left:0;top:0" width="1" height="1"><path d="M180.1 273 L184.1 277.8 L188.1 273" fill="none" stroke="#b5b0d0" stroke-width="1"/></svg><div class="a" style="left:203px;top:263px;width:121px;height:26px;background:#eff6fe;border:1px solid #dde3ec;border-radius:2px"></div><div class="t" style="left:212.50px;top:271.34px;font-size:10.0px;color:#000000;font-weight:700;letter-spacing:0.163px;">008, MAINTENA...</div>
<svg style="left:0;top:0" width="1" height="1"><path d="M307.1 273 L311.1 277.8 L315.1 273" fill="none" stroke="#b5b0d0" stroke-width="1"/></svg><div class="a" style="left:330px;top:263px;width:121px;height:26px;background:#eff6fe;border:1px solid #dde3ec;border-radius:2px"></div><div class="t" style="left:340.20px;top:271.34px;font-size:10.0px;color:#000000;font-weight:700;">31</div>
<div class="a" style="left:456px;top:263px;width:121px;height:26px;background:#eff6fe;border:1px solid #dde3ec;border-radius:2px"></div><div class="t" style="left:466.80px;top:271.34px;font-size:10.0px;color:#000000;font-weight:700;">21</div>
<div class="a" style="left:583px;top:263px;width:121px;height:26px;background:#eff6fe;border:1px solid #dde3ec;border-radius:2px"></div><div class="t" style="left:593.40px;top:271.34px;font-size:10.0px;color:#000000;font-weight:700;">147</div>
<div class="a" style="left:709px;top:263px;width:122px;height:26px;background:#eff6fe;border:1px solid #dde3ec;border-radius:2px"></div><div class="t" style="left:720.00px;top:271.34px;font-size:10.0px;color:#000000;font-weight:700;">10</div>
<div class="a" style="left:836px;top:263px;width:121px;height:26px;background:#eff6fe;border:1px solid #dde3ec;border-radius:2px"></div><div class="t" style="left:846.60px;top:271.34px;font-size:10.0px;color:#000000;font-weight:700;">0</div>
<div class="a" style="left:963px;top:263px;width:121px;height:26px;background:#eff6fe;border:1px solid #dde3ec;border-radius:2px"></div><div class="t" style="left:973.20px;top:271.34px;font-size:10.0px;color:#000000;font-weight:700;">0</div>
<div class="a" style="left:975px;top:30.5px;width:10px;height:300px;background:linear-gradient(90deg,rgba(0,0,0,0),rgba(0,0,0,0.06))"></div></div><div class="a" style="left:1252px;top:3px;width:1px;height:488px;background:#cdcdcd"></div></body></html>
